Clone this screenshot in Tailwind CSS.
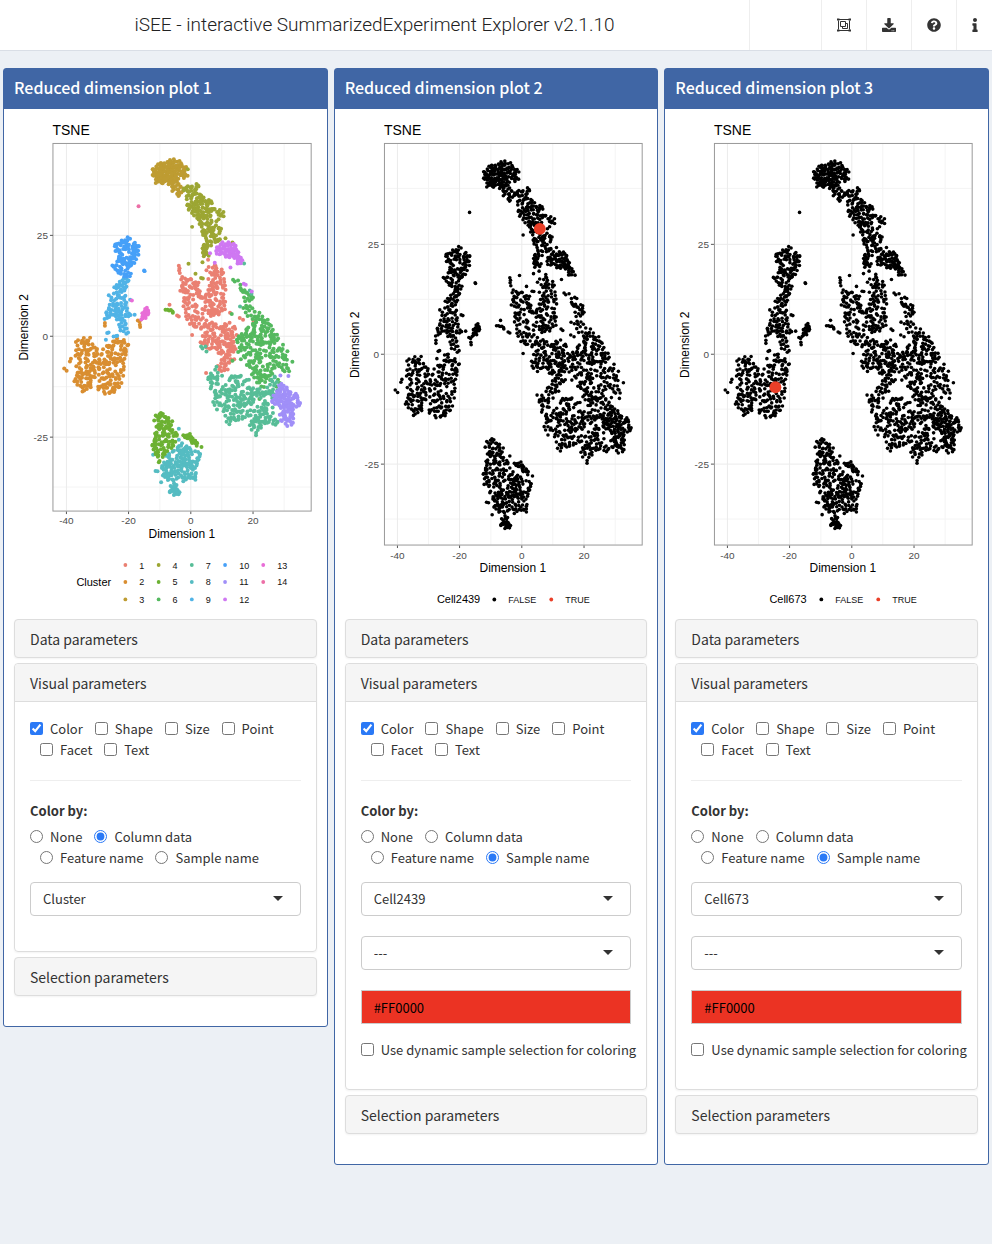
<!DOCTYPE html>
<html lang="en">
<head>
<meta charset="utf-8">
<meta name="viewport" content="width=device-width, initial-scale=1">
<title>iSEE - interactive SummarizedExperiment Explorer</title>
<script src="https://cdn.jsdelivr.net/npm/@tailwindcss/browser@4"></script>
</head>
<body class="min-h-screen bg-[#ecf0f5] font-['Noto_Sans_CJK_SC','Noto_Sans',sans-serif] text-[13px] leading-5 text-[#333]">

<header class="flex h-[51px] items-stretch border-b border-[#d9dee6] bg-white">
  <h1 class="flex flex-1 items-center justify-center whitespace-nowrap font-['Roboto','Liberation_Sans',sans-serif] text-[19px] font-light text-[#222]">iSEE - interactive SummarizedExperiment Explorer v2.1.10</h1>
  <div class="w-[72px] border-l border-[#eee]"></div>
  <button type="button" aria-label="Organize panels" class="flex w-[45px] items-center justify-center border-l border-[#eee]">
    <svg class="size-4" viewBox="0 0 16 16" fill="none" stroke="#333"><path d="M2.500 3.500v9M13.500 3.500v9M3 2.500h10M3 13.500h10"/><path d="M4.500 4.500h5v5h-5zM9.500 6.500h2v5h-5v-2"/><path d="M1 1.500h2.500v2H1zM12.500 1.500H15v2h-2.500zM1 12.500h2.500v2H1zM12.500 12.500H15v2h-2.500z" fill="#333" stroke="none"/></svg>
  </button>
  <button type="button" aria-label="Export" class="flex w-[45px] items-center justify-center border-l border-[#eee]">
    <svg class="size-3.5" viewBox="0 0 512 512" fill="#333"><path d="M216 0h80c13.300 0 24 10.700 24 24v168h87.700c17.800 0 26.700 21.500 14.100 34.100L269.700 378.300c-7.500 7.500-19.800 7.500-27.300 0L90.100 226.100c-12.600-12.600-3.700-34.100 14.100-34.100H192V24c0-13.300 10.700-24 24-24zm296 376v112c0 13.300-10.700 24-24 24H24c-13.300 0-24-10.700-24-24V376c0-13.300 10.700-24 24-24h146.700l49 49c20.100 20.100 52.500 20.100 72.600 0l49-49H488c13.300 0 24 10.700 24 24zm-124 88c0-11-9-20-20-20s-20 9-20 20 9 20 20 20 20-9 20-20zm64 0c0-11-9-20-20-20s-20 9-20 20 9 20 20 20 20-9 20-20z"/></svg>
  </button>
  <button type="button" aria-label="Documentation" class="flex w-[45px] items-center justify-center border-l border-[#eee]">
    <svg class="size-3.5" viewBox="0 0 512 512" fill="#333"><path d="M504 256c0 136.997-111.043 248-248 248S8 392.997 8 256C8 119.083 119.043 8 256 8s248 111.083 248 248zM262.655 90c-54.497 0-89.255 22.957-116.549 63.758-3.536 5.286-2.353 12.415 2.715 16.258l34.699 26.310c5.205 3.947 12.621 3.008 16.665-2.122 17.864-22.658 30.113-35.797 57.303-35.797 20.429 0 45.698 13.148 45.698 32.958 0 14.976-12.363 22.667-32.534 33.976C247.128 238.528 216 254.941 216 296v4c0 6.627 5.373 12 12 12h56c6.627 0 12-5.373 12-12v-1.333c0-28.462 83.186-29.647 83.186-106.667 0-58.002-60.165-102-116.531-102zM256 338c-25.365 0-46 20.635-46 46 0 25.364 20.635 46 46 46s46-20.636 46-46c0-25.365-20.635-46-46-46z"/></svg>
  </button>
  <button type="button" aria-label="Information" class="flex w-9 items-center justify-center border-l border-[#eee]">
    <svg class="h-3.5 w-1.5" viewBox="0 0 192 512" fill="#333"><path d="M20 424.229h20V279.771H20c-11.046 0-20-8.954-20-20V212c0-11.046 8.954-20 20-20h112c11.046 0 20 8.954 20 20v212.229h20c11.046 0 20 8.954 20 20V492c0 11.046-8.954 20-20 20H20c-11.046 0-20-8.954-20-20v-47.771c0-11.046 8.954-20 20-20zM96 0C56.235 0 24 32.235 24 72s32.235 72 72 72 72-32.235 72-72S135.764 0 96 0z"/></svg>
  </button>
</header>

<main class="grid grid-cols-3 items-start gap-1.5 px-[3px] pt-[17px] pb-10">

  <!-- Panel 1 -->
  <section class="rounded-[3px] border border-[#4066a5] bg-white pb-[30px]">
    <h2 class="flex h-10 items-center bg-[#4066a5] px-2.5 pb-1 text-base font-medium text-white">Reduced dimension plot 1</h2>
    <svg class="block h-auto w-full" viewBox="4 109 323 511" font-family="Liberation Sans, Arial, sans-serif">
      <text x="52.500" y="135" font-size="14">TSNE</text>
      <path d="M97.600 144v367M160 144v367M222 144v367M284.500 144v367M53 185h258M53 286h258M53 387h258M53 487.500h258" stroke="#f4f4f4"/>
      <path d="M66.500 144v367M128.700 144v367M191 144v367M253.300 144v367M53 235.500h258M53 336.500h258M53 437.500h258" stroke="#ebebeb"/>
      <g data-points="cluster"></g>
      <rect x="53" y="143.500" width="258.500" height="368" fill="none" stroke="#999"/>
      <path d="M66.500 512v2.500M128.700 512v2.500M191 512v2.500M253.300 512v2.500M50 235.500h3M50 336.500h3M50 437.500h3" stroke="#555"/>
      <g font-size="10" fill="#4d4d4d">
        <g text-anchor="middle"><text x="66.500" y="524">-40</text><text x="128.700" y="524">-20</text><text x="191" y="524">0</text><text x="253.300" y="524">20</text></g>
        <g text-anchor="end"><text x="48" y="239">25</text><text x="48" y="340">0</text><text x="48" y="441">-25</text></g>
      </g>
      <g font-size="12" text-anchor="middle"><text x="182" y="538">Dimension 1</text><text transform="translate(28 327.500) rotate(-90)">Dimension 2</text></g>
      <text x="76.500" y="587" font-size="11">Cluster</text>
      <g>
        <circle cx="125.500" cy="565.500" r="1.900" fill="#ea8072"/><circle cx="125.500" cy="582.500" r="1.900" fill="#d98e31"/><circle cx="125.500" cy="600" r="1.900" fill="#be9c32"/>
        <circle cx="158.800" cy="565.500" r="1.900" fill="#9ca633"/><circle cx="158.800" cy="582.500" r="1.900" fill="#6cb132"/><circle cx="158.800" cy="600" r="1.900" fill="#54b95f"/>
        <circle cx="192" cy="565.500" r="1.900" fill="#57bd97"/><circle cx="192" cy="582.500" r="1.900" fill="#55bcc2"/><circle cx="192" cy="600" r="1.900" fill="#50b3e6"/>
        <circle cx="225.300" cy="565.500" r="1.900" fill="#46a0f8"/><circle cx="225.300" cy="582.500" r="1.900" fill="#a08ff8"/><circle cx="225.300" cy="600" r="1.900" fill="#cf78f2"/>
        <circle cx="263.500" cy="565.500" r="1.900" fill="#e86dd7"/><circle cx="263.500" cy="582.500" r="1.900" fill="#ec6fa7"/>
      </g>
      <g font-size="9" fill="#111">
        <text x="139.500" y="569">1</text><text x="139.500" y="586">2</text><text x="139.500" y="603.500">3</text>
        <text x="172.700" y="569">4</text><text x="172.700" y="586">5</text><text x="172.700" y="603.500">6</text>
        <text x="206" y="569">7</text><text x="206" y="586">8</text><text x="206" y="603.500">9</text>
        <text x="239.500" y="569">10</text><text x="239.500" y="586">11</text><text x="239.500" y="603.500">12</text>
        <text x="277.500" y="569">13</text><text x="277.500" y="586">14</text>
      </g>
    </svg>
    <div class="flex flex-col gap-[5px] px-2.5">
      <button type="button" class="h-[39px] w-full rounded border border-[#ddd] bg-[#f5f5f5] px-[15px] text-left text-sm shadow-xs">Data parameters</button>
      <div class="rounded border border-[#ddd] shadow-xs">
        <button type="button" class="block h-[38px] w-full rounded-t border-b border-[#ddd] bg-[#f5f5f5] px-[15px] text-left text-sm">Visual parameters</button>
        <div class="px-[15px] pt-4 pb-[35px]">
          <div class="flex flex-wrap gap-x-0.5 leading-[21px]">
            <label class="flex items-center gap-[7px]"><input type="checkbox" checked class="size-[13px] accent-[#2a79f6]">Color</label>
            <label class="ml-2.5 flex items-center gap-[7px]"><input type="checkbox" class="size-[13px]">Shape</label>
            <label class="ml-2.5 flex items-center gap-[7px]"><input type="checkbox" class="size-[13px]">Size</label>
            <label class="ml-2.5 flex items-center gap-[7px]"><input type="checkbox" class="size-[13px]">Point</label>
            <label class="ml-2.5 flex items-center gap-[7px]"><input type="checkbox" class="size-[13px]">Facet</label>
            <label class="ml-2.5 flex items-center gap-[7px]"><input type="checkbox" class="size-[13px]">Text</label>
          </div>
          <hr class="my-5 border-[#eee]">
          <fieldset>
            <legend class="mb-[5px] font-bold">Color by:</legend>
            <div class="flex flex-wrap gap-x-0.5 leading-[21px]">
              <label class="flex items-center gap-[7px]"><input type="radio" name="by1" class="size-[13px] accent-[#2a79f6]">None</label>
              <label class="ml-2.5 flex items-center gap-[7px]"><input type="radio" name="by1" checked class="size-[13px] accent-[#2a79f6]">Column data</label>
              <label class="ml-2.5 flex items-center gap-[7px]"><input type="radio" name="by1" class="size-[13px] accent-[#2a79f6]">Feature name</label>
              <label class="ml-2.5 flex items-center gap-[7px]"><input type="radio" name="by1" class="size-[13px] accent-[#2a79f6]">Sample name</label>
            </div>
          </fieldset>
          <div class="relative mt-3.5">
            <select aria-label="Column data" class="block h-[34px] w-full appearance-none rounded border border-[#ccc] bg-white px-3"><option>Cluster</option></select>
            <svg class="pointer-events-none absolute top-3.5 right-[18px] h-[5px] w-2.5" viewBox="0 0 10 5" fill="#333"><path d="M0 0h10L5 5z"/></svg>
          </div>
        </div>
      </div>
      <button type="button" class="h-[39px] w-full rounded border border-[#ddd] bg-[#f5f5f5] px-[15px] text-left text-sm shadow-xs">Selection parameters</button>
    </div>
  </section>

  <!-- Panel 2 -->
  <section class="rounded-[3px] border border-[#4066a5] bg-white pb-[30px]">
    <h2 class="flex h-10 items-center bg-[#4066a5] px-2.5 pb-1 text-base font-medium text-white">Reduced dimension plot 2</h2>
    <svg class="block h-auto w-full" viewBox="4 109 323 511" font-family="Liberation Sans, Arial, sans-serif">
      <defs>
        <g id="grid">
          <text x="53" y="135" font-size="14">TSNE</text>
          <path d="M97.600 144v401M160 144v401M222 144v401M284.500 144v401M53 188.500h258M53 299.500h258M53 409.500h258M53 519.500h258" stroke="#f4f4f4"/>
          <path d="M66.500 144v401M128.700 144v401M191 144v401M253.300 144v401M53 244.500h258M53 354.500h258M53 464.500h258" stroke="#ebebeb"/>
        </g>
        <g id="axes">
          <rect x="53.500" y="143.500" width="258" height="402" fill="none" stroke="#999"/>
          <path d="M66.500 546v2.500M128.700 546v2.500M191 546v2.500M253.300 546v2.500M50 244.500h3M50 354.500h3M50 464.500h3" stroke="#555"/>
          <g font-size="10" fill="#4d4d4d">
            <g text-anchor="middle"><text x="66.500" y="559">-40</text><text x="128.700" y="559">-20</text><text x="191" y="559">0</text><text x="253.300" y="559">20</text></g>
            <g text-anchor="end"><text x="48" y="248">25</text><text x="48" y="358">0</text><text x="48" y="468">-25</text></g>
          </g>
          <g font-size="12" text-anchor="middle"><text x="182" y="572.500">Dimension 1</text><text transform="translate(28 345) rotate(-90)">Dimension 2</text></g>
        </g>
      </defs>
      <use href="#grid"/>
      <g data-points="plain"></g>
      <circle cx="209" cy="229" r="6" fill="#ea3f28"/>
      <use href="#axes"/>
      <text x="106" y="604" font-size="11">Cell2439</text>
      <circle cx="163.500" cy="600" r="1.900"/><text x="177.500" y="603.500" font-size="9" fill="#111">FALSE</text>
      <circle cx="220.500" cy="600" r="1.900" fill="#ea3f28"/><text x="234.500" y="603.500" font-size="9" fill="#111">TRUE</text>
    </svg>
    <div class="flex flex-col gap-[5px] px-2.5">
      <button type="button" class="h-[39px] w-full rounded border border-[#ddd] bg-[#f5f5f5] px-[15px] text-left text-sm shadow-xs">Data parameters</button>
      <div class="rounded border border-[#ddd] shadow-xs">
        <button type="button" class="block h-[38px] w-full rounded-t border-b border-[#ddd] bg-[#f5f5f5] px-[15px] text-left text-sm">Visual parameters</button>
        <div class="px-[15px] pt-4 pb-[29px]">
          <div class="flex flex-wrap gap-x-0.5 leading-[21px]">
            <label class="flex items-center gap-[7px]"><input type="checkbox" checked class="size-[13px] accent-[#2a79f6]">Color</label>
            <label class="ml-2.5 flex items-center gap-[7px]"><input type="checkbox" class="size-[13px]">Shape</label>
            <label class="ml-2.5 flex items-center gap-[7px]"><input type="checkbox" class="size-[13px]">Size</label>
            <label class="ml-2.5 flex items-center gap-[7px]"><input type="checkbox" class="size-[13px]">Point</label>
            <label class="ml-2.5 flex items-center gap-[7px]"><input type="checkbox" class="size-[13px]">Facet</label>
            <label class="ml-2.5 flex items-center gap-[7px]"><input type="checkbox" class="size-[13px]">Text</label>
          </div>
          <hr class="my-5 border-[#eee]">
          <fieldset>
            <legend class="mb-[5px] font-bold">Color by:</legend>
            <div class="flex flex-wrap gap-x-0.5 leading-[21px]">
              <label class="flex items-center gap-[7px]"><input type="radio" name="by2" class="size-[13px] accent-[#2a79f6]">None</label>
              <label class="ml-2.5 flex items-center gap-[7px]"><input type="radio" name="by2" class="size-[13px] accent-[#2a79f6]">Column data</label>
              <label class="ml-2.5 flex items-center gap-[7px]"><input type="radio" name="by2" class="size-[13px] accent-[#2a79f6]">Feature name</label>
              <label class="ml-2.5 flex items-center gap-[7px]"><input type="radio" name="by2" checked class="size-[13px] accent-[#2a79f6]">Sample name</label>
            </div>
          </fieldset>
          <div class="relative mt-3.5">
            <select aria-label="Sample name" class="block h-[34px] w-full appearance-none rounded border border-[#ccc] bg-white px-3"><option>Cell2439</option></select>
            <svg class="pointer-events-none absolute top-3.5 right-[18px] h-[5px] w-2.5" viewBox="0 0 10 5" fill="#333"><path d="M0 0h10L5 5z"/></svg>
          </div>
          <div class="relative mt-5">
            <select aria-label="Sample source" class="block h-[34px] w-full appearance-none rounded border border-[#ccc] bg-white px-3"><option>---</option></select>
            <svg class="pointer-events-none absolute top-3.5 right-[18px] h-[5px] w-2.5" viewBox="0 0 10 5" fill="#333"><path d="M0 0h10L5 5z"/></svg>
          </div>
          <input type="text" aria-label="Sample color" value="#FF0000" class="mt-5 block h-[34px] w-full border border-[#ccc] bg-[#eb3323] px-3 text-black">
          <label class="mt-[15px] flex items-center gap-[7px] whitespace-nowrap leading-[21px]"><input type="checkbox" class="size-[13px]">Use dynamic sample selection for coloring</label>
        </div>
      </div>
      <button type="button" class="h-[39px] w-full rounded border border-[#ddd] bg-[#f5f5f5] px-[15px] text-left text-sm shadow-xs">Selection parameters</button>
    </div>
  </section>

  <!-- Panel 3 -->
  <section class="rounded-[3px] border border-[#4066a5] bg-white pb-[30px]">
    <h2 class="flex h-10 items-center bg-[#4066a5] px-2.5 pb-1 text-base font-medium text-white">Reduced dimension plot 3</h2>
    <svg class="block h-auto w-full" viewBox="4 109 323 511" font-family="Liberation Sans, Arial, sans-serif">
      <use href="#grid"/>
      <g data-points="plain"></g>
      <circle cx="114.500" cy="387.500" r="6" fill="#ea3f28"/>
      <use href="#axes"/>
      <text x="108.500" y="604" font-size="11">Cell673</text>
      <circle cx="160.500" cy="600" r="1.900"/><text x="174.500" y="603.500" font-size="9" fill="#111">FALSE</text>
      <circle cx="217.500" cy="600" r="1.900" fill="#ea3f28"/><text x="231.500" y="603.500" font-size="9" fill="#111">TRUE</text>
    </svg>
    <div class="flex flex-col gap-[5px] px-2.5">
      <button type="button" class="h-[39px] w-full rounded border border-[#ddd] bg-[#f5f5f5] px-[15px] text-left text-sm shadow-xs">Data parameters</button>
      <div class="rounded border border-[#ddd] shadow-xs">
        <button type="button" class="block h-[38px] w-full rounded-t border-b border-[#ddd] bg-[#f5f5f5] px-[15px] text-left text-sm">Visual parameters</button>
        <div class="px-[15px] pt-4 pb-[29px]">
          <div class="flex flex-wrap gap-x-0.5 leading-[21px]">
            <label class="flex items-center gap-[7px]"><input type="checkbox" checked class="size-[13px] accent-[#2a79f6]">Color</label>
            <label class="ml-2.5 flex items-center gap-[7px]"><input type="checkbox" class="size-[13px]">Shape</label>
            <label class="ml-2.5 flex items-center gap-[7px]"><input type="checkbox" class="size-[13px]">Size</label>
            <label class="ml-2.5 flex items-center gap-[7px]"><input type="checkbox" class="size-[13px]">Point</label>
            <label class="ml-2.5 flex items-center gap-[7px]"><input type="checkbox" class="size-[13px]">Facet</label>
            <label class="ml-2.5 flex items-center gap-[7px]"><input type="checkbox" class="size-[13px]">Text</label>
          </div>
          <hr class="my-5 border-[#eee]">
          <fieldset>
            <legend class="mb-[5px] font-bold">Color by:</legend>
            <div class="flex flex-wrap gap-x-0.5 leading-[21px]">
              <label class="flex items-center gap-[7px]"><input type="radio" name="by3" class="size-[13px] accent-[#2a79f6]">None</label>
              <label class="ml-2.5 flex items-center gap-[7px]"><input type="radio" name="by3" class="size-[13px] accent-[#2a79f6]">Column data</label>
              <label class="ml-2.5 flex items-center gap-[7px]"><input type="radio" name="by3" class="size-[13px] accent-[#2a79f6]">Feature name</label>
              <label class="ml-2.5 flex items-center gap-[7px]"><input type="radio" name="by3" checked class="size-[13px] accent-[#2a79f6]">Sample name</label>
            </div>
          </fieldset>
          <div class="relative mt-3.5">
            <select aria-label="Sample name" class="block h-[34px] w-full appearance-none rounded border border-[#ccc] bg-white px-3"><option>Cell673</option></select>
            <svg class="pointer-events-none absolute top-3.5 right-[18px] h-[5px] w-2.5" viewBox="0 0 10 5" fill="#333"><path d="M0 0h10L5 5z"/></svg>
          </div>
          <div class="relative mt-5">
            <select aria-label="Sample source" class="block h-[34px] w-full appearance-none rounded border border-[#ccc] bg-white px-3"><option>---</option></select>
            <svg class="pointer-events-none absolute top-3.5 right-[18px] h-[5px] w-2.5" viewBox="0 0 10 5" fill="#333"><path d="M0 0h10L5 5z"/></svg>
          </div>
          <input type="text" aria-label="Sample color" value="#FF0000" class="mt-5 block h-[34px] w-full border border-[#ccc] bg-[#eb3323] px-3 text-black">
          <label class="mt-[15px] flex items-center gap-[7px] whitespace-nowrap leading-[21px]"><input type="checkbox" class="size-[13px]">Use dynamic sample selection for coloring</label>
        </div>
      </div>
      <button type="button" class="h-[39px] w-full rounded border border-[#ddd] bg-[#f5f5f5] px-[15px] text-left text-sm shadow-xs">Selection parameters</button>
    </div>
  </section>
</main>

<script>
// Each cluster: colour, regions as [count, outline], and single outlying cells.
const clusters = [
  ['#55bcc2', [[150, [485,1050,510,1030,530,1010,550,1000,575,1015,602,1035,590,1080,587,1110,560,1122,542,1112,520,1120,490,1100,485,1070]], [22, [512,1125,528,1120,540,1148,527,1156,510,1152]]],
    [537,957,537,990,460,1035,467,1084,473,1085,484,1118,492,1095,601,1033]],
  ['#6cb132', [[105, [465,905,478,915,495,905,515,930,520,965,535,975,520,1005,480,1055,470,1045,455,1010,455,1000,465,980]], [22, [545,978,575,975,600,1010,585,1004,560,988]]],
    [479,914,497,922,497,600,503,600,508,602,513,601,518,605,519,609,605,1012,477,1058]],
  ['#d98e31', [[235, [228,690,265,682,285,712,300,715,340,690,387,685,385,720,370,760,382,780,370,810,350,845,320,858,290,840,240,845,215,810,225,780,235,750,225,740]]],
    [193,776,200,783,213,747,210,755,414,632,419,635,421,652,420,645,315,640,315,648]],
  ['#50b3e6', [[105, [345,515,365,500,390,510,375,545,375,570,390,600,410,620,410,630,385,615,378,625,385,650,385,685,362,660,350,635,340,615,320,635,312,620,330,580,325,560,345,540]]],
    [314,628,318,690,322,670,341,680,352,678,349,679,326,668,391,570]],
  ['#46a0f8', [[105, [345,400,385,378,395,398,422,405,415,425,405,460,385,480,395,500,370,500,345,495,340,465,355,440,345,420]]],
    [433,482,434,484]],
  ['#be9c32', [[135, [455,180,475,160,520,148,545,155,538,215,500,225,475,225,460,210]], [16, [545,175,560,165,562,200,545,208]], [18, [515,225,540,215,555,240,538,258,515,243]]],
    [522,148,536,258]],
  ['#9ca633', [[110, [548,235,580,222,600,225,605,255,640,275,640,300,625,330,605,350,598,340,590,325,565,300,560,270,550,250]], [9, [645,290,677,312,674,322,648,306]], [52, [600,345,655,325,668,360,658,395,630,400,608,385]], [19, [610,400,625,410,624,450,606,440]]],
    [564,178,577,351,566,462,587,492,604,505,609,506,634,407,698,398,677,385,657,415,608,457]],
  ['#ea8072', [[185, [540,500,565,505,605,515,610,560,590,590,600,620,650,640,690,635,715,660,705,720,660,730,620,720,600,700,598,660,580,655,548,605,545,550]], [100, [620,470,650,465,675,485,678,550,675,600,650,625,605,615,610,560,630,530]], [45, [655,700,712,705,705,745,690,770,685,795,672,785,652,780,655,740]]],
    [537,468,539,475,538,482,540,490,509,585,537,620,532,617,625,450,645,466,761,633,730,630,720,625,691,609,619,790,577,676]],
  ['#54b95f', [[240, [720,530,742,535,760,560,765,595,800,630,825,660,840,690,870,730,878,760,865,795,840,780,830,760,815,815,790,822,765,810,750,780,718,750,715,710,712,660,745,650,735,600,725,570]], [14, [765,785,800,800,795,835,770,825]]],
    [700,510,705,515,715,512,722,525,696,613,804,630,835,810,840,820,830,830,812,845,698,753,779,868]],
  ['#57bd97', [[255, [620,800,645,775,662,800,700,795,735,795,765,832,800,840,822,800,840,830,815,880,830,910,835,945,815,960,795,940,775,980,755,965,740,930,720,930,690,945,660,905,640,890,630,840]]],
    [604,710,608,716,620,725,617,710,733,461,750,542,755,552,721,590,825,800,815,810,818,815,650,771,769,977]],
  ['#a08ff8', [[120, [845,820,870,835,875,860,895,855,900,885,885,900,882,940,860,950,840,930,835,890,812,875,830,850]]],
    [842,797,866,799]],
  ['#cf78f2', [[62, [645,415,665,400,705,400,715,430,715,445,695,445,670,438,650,430]], [14, [705,430,732,455,716,464]]],
    [631,430,645,459,692,473,732,522,738,525,756,545]],
  ['#e86dd7', [[20, [425,628,428,605,438,595,450,610,440,622]]], [396,572]],
  ['#ec6fa7', [], [416,289]]
];

let seed = 20439;
const rand = () => {
  seed = (seed + 0x6D2B79F5) | 0;
  let t = Math.imul(seed ^ (seed >>> 15), 1 | seed);
  t = (t + Math.imul(t ^ (t >>> 7), 61 | t)) ^ t;
  return ((t ^ (t >>> 14)) >>> 0) / 4294967296;
};
const inside = (x, y, p) => {
  let hit = false;
  for (let i = 0, j = p.length - 2; i < p.length; j = i, i += 2) {
    if ((p[i + 1] > y) !== (p[j + 1] > y) && x < (p[j] - p[i]) * (y - p[i + 1]) / (p[j + 1] - p[i + 1]) + p[i]) hit = !hit;
  }
  return hit;
};

const cells = [];
for (const [color, regions, singles] of clusters) {
  for (const [count, poly] of regions) {
    const xs = poly.filter((_, i) => i % 2 === 0), ys = poly.filter((_, i) => i % 2);
    const x0 = Math.min(...xs), x1 = Math.max(...xs), y0 = Math.min(...ys), y1 = Math.max(...ys);
    const placed = [];
    for (let n = 0; placed.length < count && n < 20000; n++) {
      const x = x0 + rand() * (x1 - x0), y = y0 + rand() * (y1 - y0);
      if (inside(x, y, poly) && placed.every(q => Math.hypot(q[0] - x, q[1] - y) > 4)) {
        // a little spread keeps the outline ragged
        placed.push([x + (rand() - 0.5) * 8, y + (rand() - 0.5) * 8]);
      }
    }
    placed.forEach(q => cells.push([q[0], q[1], color]));
  }
  for (let i = 0; i < singles.length; i += 2) cells.push([singles[i], singles[i + 1], color]);
}

document.querySelectorAll('[data-points]').forEach(g => {
  const plain = g.dataset.points === 'plain';
  g.innerHTML = cells.map(([x, y, color]) => {
    const cy = plain ? 354.5 + (y - 678) / 3 * 1.095 : 110 + y / 3;
    return `<circle cx="${(x / 3).toFixed(1)}" cy="${cy.toFixed(1)}" r="${plain ? 1.8 : 2}" fill="${plain ? '#000' : color}"/>`;
  }).join('');
});
</script>
</body>
</html>
